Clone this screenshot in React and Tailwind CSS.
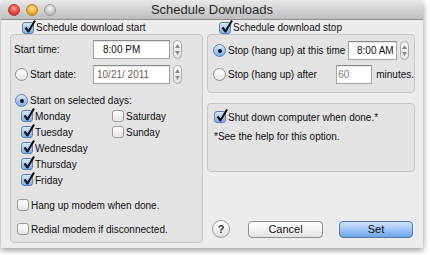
import React from 'react'

const font = { fontFamily: '"Liberation Sans", Arial, sans-serif' }

function Check({ on }) {
  return (
    <span
      className={
        'relative block w-[12px] h-[12px] shrink-0 rounded-[3px] border ' +
        (on
          ? 'border-[#5f7fb3] bg-gradient-to-b from-[#dbe9fb] via-[#a9c9f2] to-[#7fb0ee]'
          : 'border-[#9a9a9a] bg-gradient-to-b from-white to-[#e6e6e6]')
      }
    >
      {on && (
        <svg className="absolute left-[1px] top-[-3px] overflow-visible" width="12" height="13" viewBox="0 0 12 13">
          <path d="M1.5 7.5 L4.5 11.5 L11 0.5" fill="none" stroke="#111" strokeWidth="2.1" strokeLinejoin="round" />
        </svg>
      )}
    </span>
  )
}

function Radio({ on }) {
  return (
    <span
      className={
        'flex items-center justify-center w-[13px] h-[13px] shrink-0 rounded-full border ' +
        (on
          ? 'border-[#5f7fb3] bg-gradient-to-b from-[#dbe9fb] via-[#a9c9f2] to-[#7fb0ee]'
          : 'border-[#8f8f8f] bg-gradient-to-b from-white to-[#e4e4e4]')
      }
    >
      {on && <span className="block w-[4px] h-[4px] rounded-full bg-[#111]" />}
    </span>
  )
}

function Stepper() {
  return (
    <span className="flex flex-col items-center justify-between w-[9px] h-[19px] shrink-0 rounded-full border border-[#a9a9a9] bg-gradient-to-b from-[#fbfbfb] to-[#e2e2e2] py-[3px]">
      <svg width="5" height="4" viewBox="0 0 5 4"><path d="M0 4 L2.5 0 L5 4 Z" fill="#8a8a8a" /></svg>
      <svg width="5" height="4" viewBox="0 0 5 4"><path d="M0 0 L2.5 4 L5 0 Z" fill="#8a8a8a" /></svg>
    </span>
  )
}

function Field({ w, children, className = '' }) {
  return (
    <span
      className={
        'flex h-[19px] shrink-0 bg-white border border-[#a4a4a4] border-t-[#8a8a8a] shadow-[inset_0_1px_1px_rgba(0,0,0,0.12)] ' +
        className
      }
      style={{ width: w }}
    >
      {children}
    </span>
  )
}

function DayRow({ label, on }) {
  return (
    <div className="flex items-center h-[16px] gap-[2px]">
      <Check on={on} />
      <span>{label}</span>
    </div>
  )
}

export default function App() {
  return (
    <div className="w-[430px] h-[255px] bg-white overflow-hidden text-[10px] text-[#111]" style={font}>
      <div className="ml-[1px] w-[422px] h-[248px] flex flex-col bg-[#ececec] rounded-t-[5px] shadow-[0_2px_6px_rgba(0,0,0,0.45)] overflow-hidden">
        <div className="h-[20px] shrink-0 grid grid-cols-[1fr_auto_1fr] items-center bg-gradient-to-b from-[#e9e9e9] to-[#bdbdbd] border-b border-[#8e8e8e]">
          <div className="flex items-center gap-[6px] ml-[7px]">
            <span className="block w-[12px] h-[12px] rounded-full border border-[#b23a35] bg-[radial-gradient(circle_at_50%_35%,#ff9c92,#e0443b_60%,#b62a22)]" />
            <span className="block w-[12px] h-[12px] rounded-full border border-[#b8801d] bg-[radial-gradient(circle_at_50%_35%,#ffe49a,#eaaa2c_60%,#c07d12)]" />
            <span className="block w-[12px] h-[12px] rounded-full border border-[#9a9a9a] bg-[radial-gradient(circle_at_50%_35%,#f4f4f4,#c6c6c6_60%,#a8a8a8)]" />
          </div>
          <div className="text-[13px] text-[#2a2a2a] leading-none">Schedule Downloads</div>
          <div />
        </div>

        <div className="flex-1 flex pl-[9px] pr-[8px] pb-[5px] gap-[4px]">
          {/* left column */}
          <div className="w-[193px] flex flex-col">
            <div className="h-[13px] mt-[1px] flex items-center gap-[2px] pl-[12px]">
              <Check on />
              <span>Schedule download start</span>
            </div>
            <div className="flex-1 mt-[0px] border border-[#c6c6c6] rounded-[4px] bg-[#e3e3e3] pl-[3px] pt-[5px]">
              <div className="flex items-center">
                <span className="w-[79px]">Start time:</span>
                <Field w={77} className="items-center pl-[9px]">8:00 PM</Field>
                <span className="ml-[3px]"><Stepper /></span>
              </div>
              <div className="flex items-center mt-[6px]">
                <span className="ml-[1px]"><Radio /></span>
                <span className="ml-[2px] w-[63px]">Start date:</span>
                <Field w={77} className="items-center pl-[3px] text-[#6f5d50]">10/21/ 2011</Field>
                <span className="ml-[3px]"><Stepper /></span>
              </div>
              <div className="flex items-center mt-[9px] pl-[1px] gap-[2px]">
                <Radio on />
                <span>Start on selected days:</span>
              </div>
              <div className="grid grid-cols-[91px_1fr] pl-[7px]">
                <div className="flex flex-col">
                  <DayRow label="Monday" on />
                  <DayRow label="Tuesday" on />
                  <DayRow label="Wednesday" on />
                  <DayRow label="Thursday" on />
                  <DayRow label="Friday" on />
                </div>
                <div className="flex flex-col">
                  <DayRow label="Saturday" />
                  <DayRow label="Sunday" />
                </div>
              </div>
              <div className="flex items-center h-[16px] mt-[9px] pl-[3px] gap-[2px]">
                <Check />
                <span>Hang up modem when done.</span>
              </div>
              <div className="flex items-center h-[16px] mt-[8px] pl-[3px] gap-[2px]">
                <Check />
                <span>Redial modem if disconnected.</span>
              </div>
            </div>
          </div>

          {/* right column */}
          <div className="w-[208px] flex flex-col">
            <div className="h-[13px] mt-[1px] flex items-center gap-[2px] pl-[12px]">
              <Check on />
              <span>Schedule download stop</span>
            </div>
            <div className="h-[59px] border border-[#c6c6c6] rounded-[4px] bg-[#e3e3e3] pl-[5px] pt-[6px]">
              <div className="flex items-center">
                <Radio on />
                <span className="ml-[2px] w-[120px]">Stop (hang up) at this time</span>
                <Field w={49} className="items-center pl-[8px]">8:00 AM</Field>
                <span className="ml-[3px]"><Stepper /></span>
              </div>
              <div className="flex items-center mt-[5px]">
                <Radio />
                <span className="ml-[2px] w-[109px]">Stop (hang up) after</span>
                <Field w={36} className="items-start pl-[1px] pt-[1px] text-[#7a7a7a]">60</Field>
                <span className="ml-[4px]">minutes.</span>
              </div>
            </div>
            <div className="h-[69px] mt-[10px] border border-[#c6c6c6] rounded-[4px] bg-[#e3e3e3] pl-[6px] pt-[6px]">
              <div className="flex items-center h-[14px] gap-[2px]">
                <Check on />
                <span>Shut down computer when done.*</span>
              </div>
              <div className="flex items-center h-[14px] mt-[5px]">*See the help for this option.</div>
            </div>
            <div className="mt-auto mb-[5px] flex items-center pl-[5px]">
              <span className="flex items-center justify-center w-[18px] h-[18px] rounded-full border border-[#9c9c9c] bg-gradient-to-b from-white to-[#e0e0e0] text-[11px] font-bold text-[#333]">?</span>
              <span className="ml-[18px] flex items-center justify-center w-[75px] h-[17px] rounded-[4px] border border-[#8e8e8e] bg-gradient-to-b from-white via-[#f4f4f4] to-[#e2e2e2] text-[11px]">Cancel</span>
              <span className="ml-[16px] flex items-center justify-center w-[74px] h-[17px] rounded-[4px] border border-[#5a77a8] bg-gradient-to-b from-[#d3e4fa] via-[#9dc3f3] to-[#6ea6ec] text-[11px]">Set</span>
            </div>
          </div>
        </div>
      </div>
    </div>
  )
}
